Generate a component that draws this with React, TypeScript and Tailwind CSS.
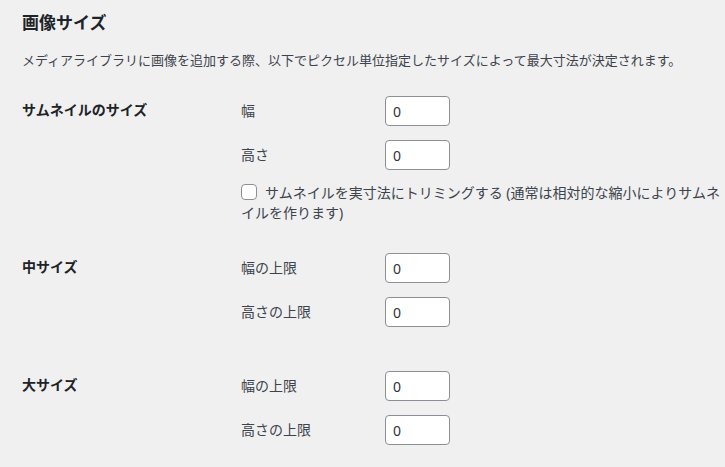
const font = "font-['Noto_Sans','Noto_Sans_CJK_JP',sans-serif]";

function SizeInput({ label }: { label: string }) {
  return (
    <div className="flex h-[30px] items-center">
      <label className="w-[144px] text-[14px] leading-[18px] text-[#3c434a]">{label}</label>
      <input
        type="text"
        defaultValue="0"
        className="h-[30px] w-[65px] rounded-[4px] border border-[#8c8f94] bg-white px-[7px] text-[14px] text-[#2c3338] outline-none"
      />
    </div>
  );
}

function SizeRow({
  title,
  fields,
  children,
  extraBottom,
}: {
  title: string;
  fields: string[];
  children?: React.ReactNode;
  extraBottom?: boolean;
}) {
  return (
    <div className={`flex ${extraBottom ? 'pb-[14px]' : ''}`}>
      <div className="w-[219px] shrink-0 pt-[20px] text-[14px] font-semibold leading-[18px] text-[#1d2327]">
        {title}
      </div>
      <div className="flex flex-1 flex-col gap-[14px] py-[15px]">
        {fields.map((f) => (
          <SizeInput key={f} label={f} />
        ))}
        {children}
      </div>
    </div>
  );
}

export default function App() {
  return (
    <div className={`min-h-[467px] w-full overflow-hidden bg-[#f0f0f1] pl-[22px] ${font}`}>
      <h2 className="pt-[12px] text-[17px] font-bold leading-[22px] text-[#1d2327]">画像サイズ</h2>
      <p className="mt-[16px] text-[13px] leading-[20px] text-[#3c434a]">
        メディアライブラリに画像を追加する際、以下でピクセル単位指定したサイズによって最大寸法が決定されます。
      </p>
      <div className="mt-[11px]">
        <SizeRow title="サムネイルのサイズ" fields={['幅', '高さ']}>
          <label className="-mt-[1px] text-[14px] leading-[20px] text-[#3c434a]">
            <input
              type="checkbox"
              className="mr-[8px] inline-block h-[16px] w-[16px] appearance-none rounded-[4px] border border-[#8c8f94] bg-white align-[-2px]"
            />
            サムネイルを実寸法にトリミングする (通常は相対的な縮小によりサムネイルを作ります)
          </label>
        </SizeRow>
        <SizeRow title="中サイズ" fields={['幅の上限', '高さの上限']} extraBottom />
        <SizeRow title="大サイズ" fields={['幅の上限', '高さの上限']} />
      </div>
    </div>
  );
}
